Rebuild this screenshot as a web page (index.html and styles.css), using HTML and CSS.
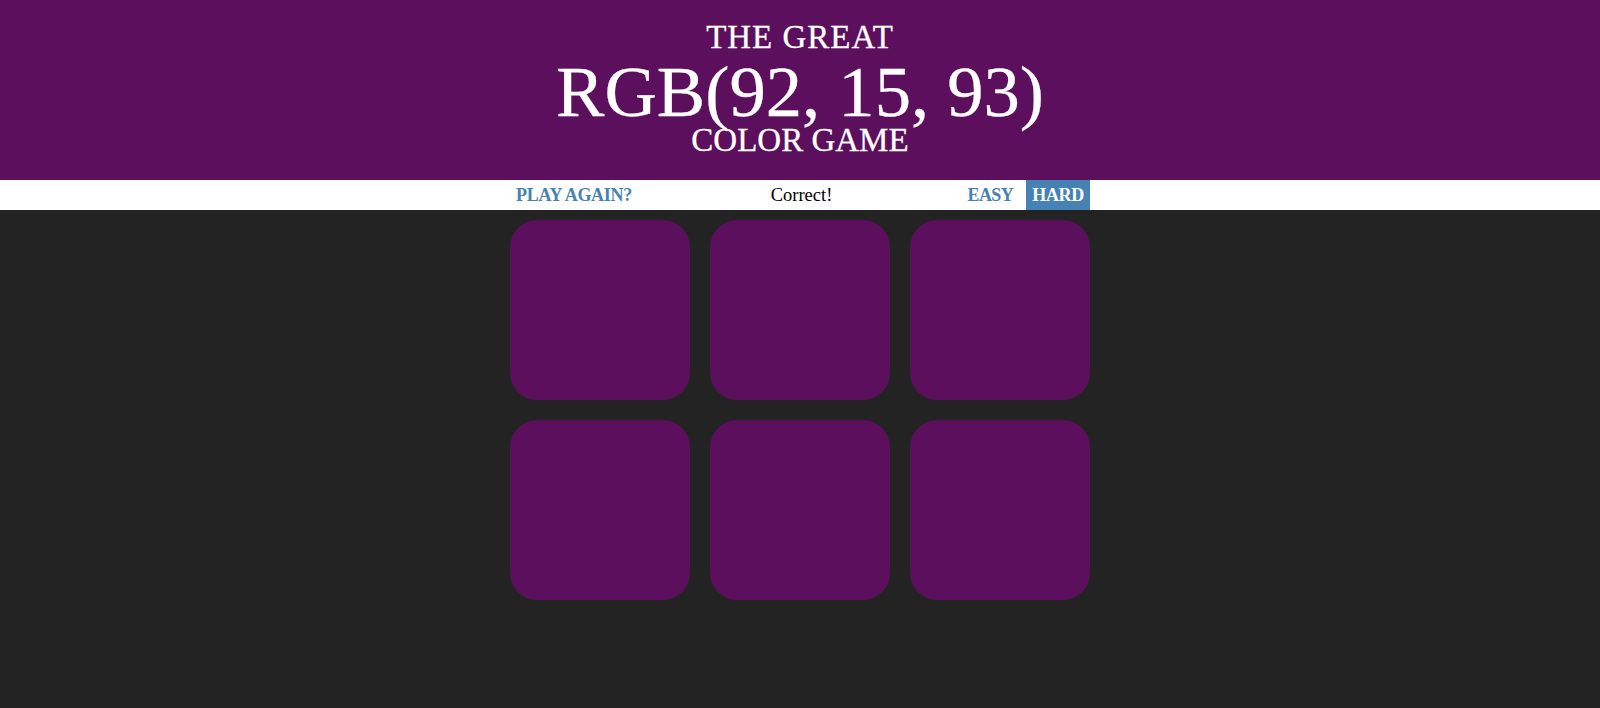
FILE: index.html
```html
<!DOCTYPE html>
<html lang="en">
<head>
<meta charset="utf-8">
<title>Color Game</title>
<link rel="stylesheet" href="styles.css">
</head>
<body>
  <h1 class="title">
    <span class="title-line title-first">The Great</span>
    <span class="color-display">RGB(92, 15, 93)</span>
    <span class="title-line title-last">Color Game</span>
  </h1>
  <div class="stripe">
    <div class="stripe-inner">
      <div class="left"><button class="btn">Play Again?</button></div>
      <span class="message">Correct!</span>
      <div class="right"><button class="btn mode">Easy</button> <button class="btn mode selected">Hard</button></div>
    </div>
  </div>
  <div class="board">
    <div class="square"></div>
    <div class="square"></div>
    <div class="square"></div>
    <div class="square"></div>
    <div class="square"></div>
    <div class="square"></div>
  </div>
</body>
</html>
```
FILE: styles.css
```css
html, body {
  margin: 0;
  padding: 0;
}
body {
  background: #232323;
  font-family: "Liberation Serif", "Times New Roman", serif;
  font-size: 18px;
  height: 708px;
  overflow: hidden;
}
.title {
  margin: 0;
  padding: 19px 0 27px;
  background: #5c0f5d;
  color: #fff;
  text-align: center;
  text-transform: uppercase;
  font-weight: normal;
  -webkit-text-stroke: 0.3px #fff;
}
.title-line {
  display: block;
  font-size: 33px;
  line-height: 36px;
}
.title-first {
  letter-spacing: 1px;
}
.title-last {
  line-height: 25px;
}
.color-display {
  display: block;
  font-size: 72.6px;
  line-height: 73px;
}
.stripe {
  background: #fff;
  height: 30px;
}
.stripe-inner {
  width: 580px;
  margin: 0 auto;
  height: 30px;
  display: grid;
  grid-template-columns: 1fr auto 1fr;
  align-items: stretch;
}
.left {
  display: flex;
  justify-content: flex-start;
}
.right {
  display: flex;
  justify-content: flex-end;
  gap: 7px;
}
.message {
  color: #000;
  line-height: 30px;
  font-size: 18.5px;
  padding-left: 3px;
}
.btn {
  border: none;
  background: none;
  color: #4682b4;
  font-family: inherit;
  font-size: 18px;
  font-weight: 700;
  text-transform: uppercase;
  letter-spacing: -0.3px;
  height: 30px;
  padding: 0 6px;
  margin: 0;
  line-height: 30px;
}
.mode {
  letter-spacing: -0.6px;
}
.selected {
  background: #4682b4;
  color: #fff;
  letter-spacing: -0.3px;
}
.board {
  width: 580px;
  margin: 0 auto;
  padding: 10px;
  display: grid;
  grid-template-columns: repeat(3, 180px);
  grid-auto-rows: 180px;
  gap: 20px;
}
.square {
  background: #5c0f5d;
  border-radius: 15%;
}
```
